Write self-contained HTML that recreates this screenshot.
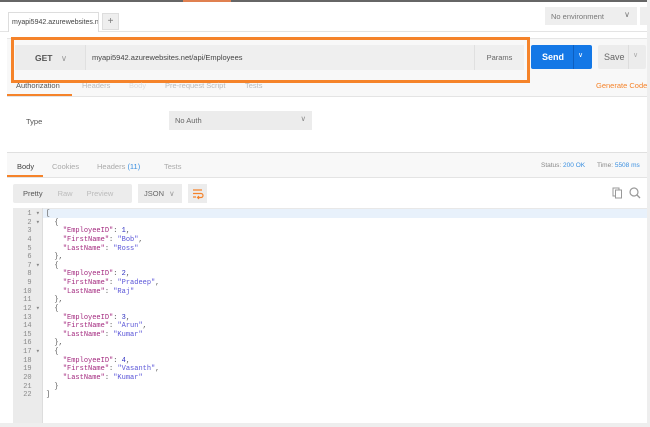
<!DOCTYPE html>
<html><head><style>
*{box-sizing:border-box;margin:0;padding:0}
body{width:650px;height:427px;background:#fff;font-family:"Liberation Sans",sans-serif;position:relative;overflow:hidden;color:#555}
.a{position:absolute}
.code{font-family:"Liberation Mono",monospace;font-size:7px;line-height:8.62px}
.k{color:#a3287e}.s{color:#5a55d8}.n{color:#2d2ec0}
</style></head><body>
<div class="a" style="left:0;top:0;width:650px;height:2px;background:#666"></div>
<div class="a" style="left:183px;top:0;width:48px;height:2px;background:#e08050"></div>
<div class="a" style="left:0;top:31px;width:650px;height:1px;background:#e4e4e4"></div>
<div class="a" style="left:8px;top:12px;width:91px;height:20px;border:1px solid #ddd;border-bottom:none;background:#fff;font-size:7px;padding:6px 3px;color:#444;white-space:nowrap;overflow:hidden">myapi5942.azurewebsites.n</div>
<div class="a" style="left:102px;top:13px;width:17px;height:17px;background:#eee;border:1px solid #ddd;font-size:10px;text-align:center;line-height:15px;color:#777">+</div>
<div class="a" style="left:545px;top:7px;width:92px;height:18px;background:#eee;font-size:7.5px;color:#777;padding:5px 6px">No environment<span style="position:absolute;right:7px;top:3px;font-size:8px">&#8744;</span></div>
<div class="a" style="left:640px;top:7px;width:10px;height:18px;background:#eee"></div>
<div class="a" style="left:7px;top:38px;width:643px;height:58px;background:#f8f8f8;border-top:1px solid #e6e6e6"></div>
<div class="a" style="left:15px;top:45px;width:70px;height:25px;background:#ececec;font-size:8.5px;font-weight:bold;color:#555;padding:8px 0 0 20px">GET <span style="font-weight:normal;color:#999;margin-left:6px">&#8744;</span></div>
<div class="a" style="left:85px;top:45px;width:389px;height:25px;background:#efefef;border-left:1px solid #e0e0e0;font-size:7.5px;color:#444;padding:8px 6px">myapi5942.azurewebsites.net/api/Employees</div>
<div class="a" style="left:474px;top:45px;width:50px;height:25px;background:#efefef;border-left:1px solid #e0e0e0;font-size:7.5px;color:#666;text-align:center;padding-top:8px">Params</div>
<div class="a" style="left:11px;top:37px;width:519px;height:46px;border:3px solid #f5832a"></div>
<div class="a" style="left:531px;top:45px;width:61px;height:24px;background:#1478e6;border-radius:2px;color:#fff;font-size:9px;font-weight:bold;padding:7px 0 0 11px">Send</div>
<div class="a" style="left:573px;top:45px;width:1px;height:24px;background:#0d5fc0"></div>
<div class="a" style="left:578px;top:51px;color:#fff;font-size:7px">&#8744;</div>
<div class="a" style="left:598px;top:45px;width:48px;height:24px;background:#ececec;border-radius:2px;font-size:9px;color:#666;padding:7px 0 0 6px">Save</div>
<div class="a" style="left:628px;top:45px;width:1px;height:24px;background:#ddd"></div>
<div class="a" style="left:633px;top:51px;color:#aaa;font-size:7px">&#8744;</div>
<div class="a" style="left:596px;top:81px;font-size:7.5px;color:#f5832a">Generate Code</div>
<div class="a" style="left:16px;top:81px;font-size:7.5px;color:#555">Authorization</div>
<div class="a" style="left:82px;top:81px;font-size:7.5px;color:#bbb">Headers</div>
<div class="a" style="left:129px;top:81px;font-size:7.5px;color:#ddd">Body</div>
<div class="a" style="left:165px;top:81px;font-size:7.5px;color:#bbb">Pre-request Script</div>
<div class="a" style="left:245px;top:81px;font-size:7.5px;color:#bbb">Tests</div>
<div class="a" style="left:7px;top:94px;width:65px;height:2px;background:#f5832a"></div>
<div class="a" style="left:7px;top:96px;width:643px;height:1px;background:#e4e4e4"></div>
<div class="a" style="left:26px;top:117px;font-size:7.5px;color:#555">Type</div>
<div class="a" style="left:169px;top:111px;width:143px;height:19px;background:#ececec;font-size:7.5px;color:#666;padding:5px 6px">No Auth<span style="position:absolute;right:6px;top:3px;color:#888">&#8744;</span></div>
<div class="a" style="left:7px;top:152px;width:643px;height:1px;background:#e0e0e0"></div>
<div class="a" style="left:7px;top:153px;width:643px;height:25px;background:#f8f8f8;border-bottom:1px solid #e4e4e4"></div>
<div class="a" style="left:17px;top:162px;font-size:7.5px;color:#444">Body</div>
<div class="a" style="left:52px;top:162px;font-size:7.5px;color:#aaa">Cookies</div>
<div class="a" style="left:97px;top:162px;font-size:7.5px;color:#aaa">Headers <span style="color:#3a8fe0">(11)</span></div>
<div class="a" style="left:164px;top:162px;font-size:7.5px;color:#aaa">Tests</div>
<div class="a" style="left:7px;top:175px;width:36px;height:2px;background:#f5832a"></div>
<div class="a" style="left:541px;top:162px;font-size:6.5px;color:#888">Status: <span style="color:#3a8fe0">200 OK</span></div>
<div class="a" style="left:597px;top:162px;font-size:6.5px;color:#888">Time: <span style="color:#3a8fe0">5508 ms</span></div>
<div class="a" style="left:13px;top:184px;width:119px;height:19px;background:#ececec;border-radius:2px;font-size:7.5px;padding:5px 0 0 10px;color:#555">Pretty<span style="color:#bbb;margin-left:15px">Raw</span><span style="color:#bbb;margin-left:14px">Preview</span></div>
<div class="a" style="left:138px;top:184px;width:44px;height:19px;background:#ececec;font-size:7.5px;padding:5px 0 0 6px;color:#666">JSON <span style="color:#999;margin-left:3px">&#8744;</span></div>
<div class="a" style="left:188px;top:184px;width:19px;height:19px;background:#ececec">
<svg width="19" height="19"><path d="M5 6h9M5 9.5h8a2 2 0 0 1 0 4h-3M11 12l-1.5 1.5L11 15M5 13h3" stroke="#f5832a" stroke-width="1.2" fill="none"/></svg></div>
<svg class="a" style="left:612px;top:186px" width="30" height="14"><rect x="1" y="2" width="6" height="8" fill="none" stroke="#999"/><rect x="3.5" y="4" width="6" height="8" fill="#fff" stroke="#999"/><circle cx="22" cy="6" r="4" fill="none" stroke="#999" stroke-width="1.2"/><path d="M25 9l3 3" stroke="#999" stroke-width="1.3"/></svg>
<div class="a" style="left:13px;top:208px;width:635px;height:215px;border-top:1px solid #e8e8e8"></div>
<div class="a" style="left:13px;top:208px;width:30px;height:215px;background:#ebebeb;border-right:1px solid #ddd"></div>
<div class="a" style="left:43px;top:209px;width:605px;height:8.6px;background:#e8f1fb"></div>
<div class="a" style="left:647px;top:0;width:3px;height:427px;background:#eee"></div>
<div class="a" style="left:0;top:423px;width:650px;height:4px;background:#eee"></div>
<div class="a code" style="left:13px;top:210px;width:29px;text-align:right;color:#888;padding-right:2px">1 &#9662;<br>2 &#9662;<br>3&nbsp;&nbsp;<br>4&nbsp;&nbsp;<br>5&nbsp;&nbsp;<br>6&nbsp;&nbsp;<br>7 &#9662;<br>8&nbsp;&nbsp;<br>9&nbsp;&nbsp;<br>10&nbsp;&nbsp;<br>11&nbsp;&nbsp;<br>12 &#9662;<br>13&nbsp;&nbsp;<br>14&nbsp;&nbsp;<br>15&nbsp;&nbsp;<br>16&nbsp;&nbsp;<br>17 &#9662;<br>18&nbsp;&nbsp;<br>19&nbsp;&nbsp;<br>20&nbsp;&nbsp;<br>21&nbsp;&nbsp;<br>22&nbsp;&nbsp;</div>
<pre class="a code" style="left:46px;top:210px;color:#555">[
  {
    <span class="k">"EmployeeID"</span>: <span class="n">1</span>,
    <span class="k">"FirstName"</span>: <span class="s">"Bob"</span>,
    <span class="k">"LastName"</span>: <span class="s">"Ross"</span>
  },
  {
    <span class="k">"EmployeeID"</span>: <span class="n">2</span>,
    <span class="k">"FirstName"</span>: <span class="s">"Pradeep"</span>,
    <span class="k">"LastName"</span>: <span class="s">"Raj"</span>
  },
  {
    <span class="k">"EmployeeID"</span>: <span class="n">3</span>,
    <span class="k">"FirstName"</span>: <span class="s">"Arun"</span>,
    <span class="k">"LastName"</span>: <span class="s">"Kumar"</span>
  },
  {
    <span class="k">"EmployeeID"</span>: <span class="n">4</span>,
    <span class="k">"FirstName"</span>: <span class="s">"Vasanth"</span>,
    <span class="k">"LastName"</span>: <span class="s">"Kumar"</span>
  }
]</pre>
</body></html>
